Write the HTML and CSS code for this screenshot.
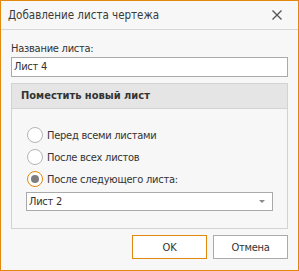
FILE: index.html
```html
<!DOCTYPE html>
<html lang="ru">
<head>
<meta charset="utf-8">
<title>Добавление листа чертежа</title>
<link rel="stylesheet" href="styles.css">
</head>
<body>
<div class="dialog">
  <div class="titlebar">
    <span class="title">Добавление листа чертежа</span>
    <span class="close">
      <svg width="10" height="10" viewBox="0 0 10 10"><path d="M0.5 0.5 L9.5 9.5 M9.5 0.5 L0.5 9.5" stroke="#555" stroke-width="1.4" fill="none"/></svg>
    </span>
  </div>
  <div class="content">
    <div class="label">Название листа:</div>
    <div class="input">Лист 4</div>
    <div class="group">
      <div class="group-header">Поместить новый лист</div>
      <div class="group-body">
        <div class="radio-row"><span class="radio"></span><span>Перед всеми листами</span></div>
        <div class="radio-row"><span class="radio"></span><span>После всех листов</span></div>
        <div class="radio-row"><span class="radio checked"></span><span>После следующего листа:</span></div>
        <div class="combo"><span>Лист 2</span><span class="arrow"></span></div>
      </div>
    </div>
    <div class="buttons">
      <div class="btn btn-default">OK</div>
      <div class="btn">Отмена</div>
    </div>
  </div>
</div>
</body>
</html>
```
FILE: styles.css
```css
* { box-sizing: border-box; }
html, body { margin: 0; padding: 0; background: #fff; }
body {
  font-family: "DejaVu Sans Condensed", "DejaVu Sans", sans-serif;
  font-stretch: condensed;
  font-size: 11px;
  letter-spacing: -0.25px;
  color: #333;
}
.dialog {
  width: 299px;
  height: 271px;
  border: 1px solid #e0870c;
  background: #f7f7f7;
  display: flex;
  flex-direction: column;
}
.titlebar {
  height: 29px;
  border-bottom: 1px solid #d6d6d6;
  display: flex;
  align-items: center;
  justify-content: space-between;
  padding: 0 16px 1px 7px;
}
.title {
  font-size: 11.5px;
  letter-spacing: 0;
  color: #3a3a3a;
}
.close {
  display: flex;
  width: 10px;
  height: 10px;
}
.content {
  padding: 0 10px;
  display: flex;
  flex-direction: column;
}
.label {
  height: 14px;
  line-height: 14px;
  margin-top: 12px;
}
.input {
  margin-top: 1px;
  height: 20px;
  border: 1px solid #aaaaaa;
  background: #fff;
  line-height: 18px;
  padding-left: 2px;
}
.group {
  margin-top: 6px;
  border: 1px solid #d3d3d3;
  height: 146px;
}
.group-header {
  height: 25px;
  background: #e5e5e5;
  border-bottom: 1px solid #d3d3d3;
  font-weight: bold;
  letter-spacing: 0;
  line-height: 24px;
  padding-left: 9px;
}
.group-body {
  padding: 15px 14px 0 14px;
  display: flex;
  flex-direction: column;
}
.radio-row {
  height: 22px;
  display: flex;
  align-items: center;
  gap: 4px;
}
.radio {
  width: 16px;
  height: 16px;
  border-radius: 50%;
  border: 1px solid #b5b5b5;
  background: #fff;
  display: flex;
  align-items: center;
  justify-content: center;
  margin-left: 1px;
}
.radio.checked { border-color: #e0870c; }
.radio.checked::after {
  content: "";
  width: 8px;
  height: 8px;
  border-radius: 50%;
  background: #7d7d7d;
}
.combo {
  margin-top: 2px;
  height: 19px;
  border: 1px solid #aaaaaa;
  background: #fff;
  display: flex;
  align-items: center;
  justify-content: space-between;
  padding: 0 7px 0 2px;
}
.arrow {
  width: 0;
  height: 0;
  border-left: 3px solid transparent;
  border-right: 3px solid transparent;
  border-top: 3px solid #8a8a8a;
}
.buttons {
  margin-top: 6px;
  display: flex;
  justify-content: flex-end;
  gap: 6px;
}
.btn {
  width: 75px;
  height: 24px;
  border: 1px solid #ababab;
  background: #fff;
  display: flex;
  align-items: center;
  justify-content: center;
}
.btn-default { border-color: #e0870c; }
```
